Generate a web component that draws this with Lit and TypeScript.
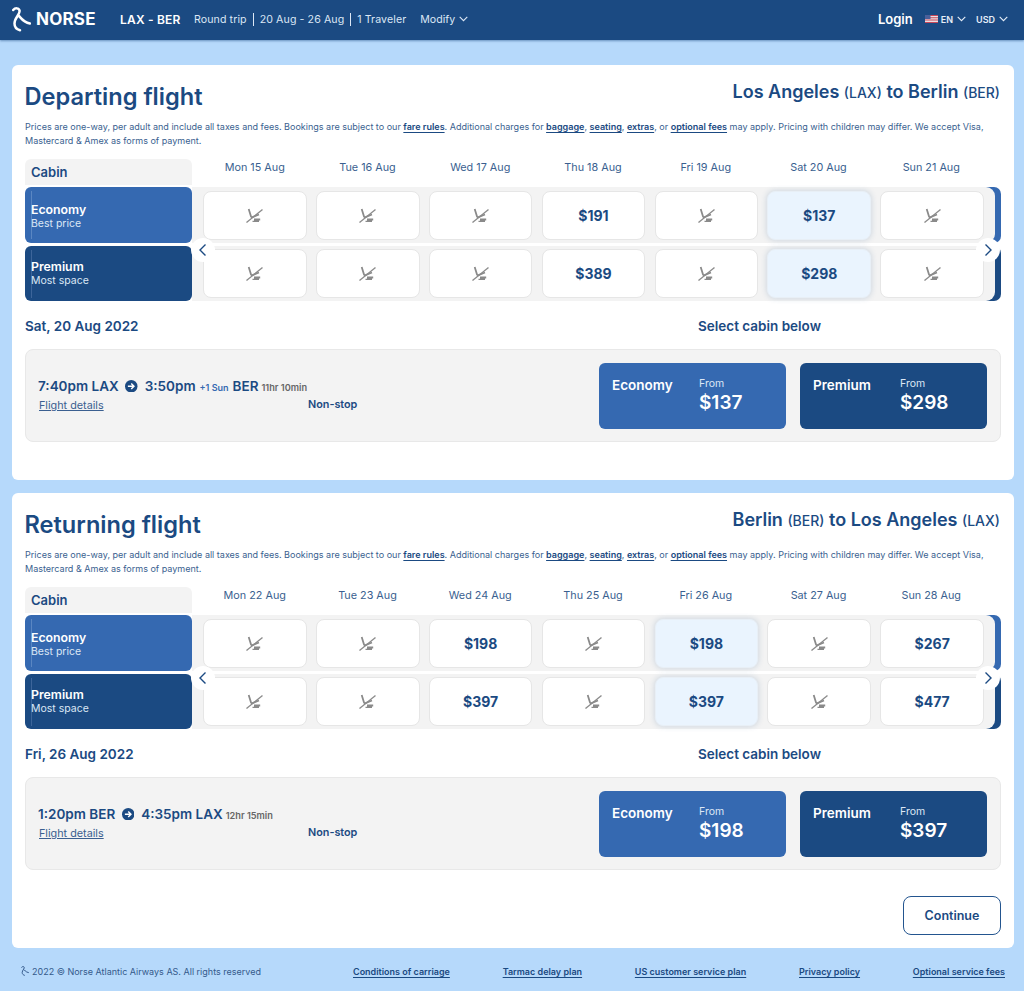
import { LitElement, html, css, svg } from "lit";
import { customElement, property } from "lit/decorators.js";

const chevronDown = html`<svg class="chev" width="9" height="6" viewBox="0 0 9 6"><path d="M.7.8 4.500 4.700 8.300.8" fill="none" stroke="currentColor" stroke-width="1.100"/></svg>`;
const ribbon = svg`<path d="M1.200 3C3 .8 7 .6 7.600 3.800 8 7.500 2.500 10.800 2.500 16.500c0 3.500 2.500 6 5.500 6.800M6 8c2.500 2 4.500 7 12 8.500" fill="none" stroke="currentColor" stroke-width="2.500" stroke-linecap="round"/>`;
const noSeat = html`<svg class="noseat" width="17" height="15" viewBox="0 0 17 15">
  <path d="M.5 14.500 16.500 1.500" stroke="#8a8a8a" stroke-width="1.300" fill="none"/>
  <path d="M2.700 1 5 8.500q.4 1 1.500.6L13 6.500" stroke="#8a8a8a" stroke-width="1.800" fill="none"/>
  <path d="M8 10.500h6.200v2H13V14H6.500v-1.300H8z" fill="#8a8a8a"/>
</svg>`;
const flag = html`<svg class="flag" width="13" height="8" viewBox="0 0 13 8">
  <rect width="13" height="8" fill="#e9dfe3"/>
  <path d="M0 0h13v1H0zM0 2.300h13v1H0zM0 4.600h13v1H0zM0 7h13v1H0z" fill="#c9485a"/>
  <rect width="5.500" height="4" fill="#4a5f9a"/>
</svg>`;

const DESC_TAIL = html`Prices are one-way, per adult and include all taxes and fees. Bookings are subject to our <a>fare rules</a>. Additional charges for <a>baggage</a>, <a>seating</a>, <a>extras</a>, or <a>optional fees</a> may apply. Pricing with children may differ. We accept Visa, Mastercard &amp; Amex as forms of payment.`;

interface Fl {
  title: string;
  route: unknown;
  days: string[];
  eco: (string | null)[];
  prem: (string | null)[];
  sel: number;
  dateLabel: string;
  times: unknown;
  ecoFrom: string;
  premFrom: string;
}

@customElement("flight-section")
class FlightSection extends LitElement {
  @property({ attribute: false }) data!: Fl;
  static styles = css`
    :host { display: block; color: #1b4a82; }
    .top { display: flex; justify-content: space-between; align-items: flex-start; }
    h2 { margin: 0 0 0 -.5px; padding-top: 1px; font-size: 23.600px; line-height: 30px; font-weight: 600; }
    .route { font-size: 18px; line-height: 22px; font-weight: 600; padding-right: 1px; }
    .route small { font-size: 14px; font-weight: 500; }
    .desc { margin: 8px 0 11px; font-size: 9.030px; line-height: 14px; color: #3a5f90; width: 965px; }
    .desc a { font-weight: 600; color: #1b4a82; text-decoration: underline; text-underline-offset: 1.500px; }
    .table { position: relative; display: grid; grid-template-columns: 167px 1fr; width: 976px; }
    .cabin-h { background: #f3f3f3; height: 26px; margin-bottom: 2px; border-radius: 6px 6px 0 0; font-size: 13px; font-weight: 600; line-height: 26px; padding-left: 6px; box-sizing: border-box; }
    .days { display: grid; grid-template-columns: repeat(7, 1fr); column-gap: 9.250px; padding: 1px 18px 0 11px; }
    .days div { text-align: center; font-size: 10.800px; line-height: 16px; color: #3a5f90; font-weight: 400; }
    .tile { border-radius: 6px; color: #fff; padding: 1px 0 0 6px; box-sizing: border-box; display: flex; flex-direction: column; justify-content: center; background-repeat: no-repeat; background-size: 1px 48px; background-position: 6px center; }
    .tile b { font-size: 12.300px; font-weight: 600; line-height: 14px; }
    .tile span { font-size: 10.500px; line-height: 13px; color: #dce7f5; }
    .eco { background-color: #3569b1; background-image: linear-gradient(#5a86c2, #5a86c2); height: 56px; padding-top: 2px; }
    .prem { background-color: #1b4a82; background-image: linear-gradient(#3d659a, #3d659a); height: 55px; margin-top: 3px; padding-top: 0; }
    .strip { padding-right: 6px; border-radius: 0 7px 7px 0; box-sizing: border-box; }
    .strip.a { height: 56px; background: #3569b1; }
    .strip.b { height: 55px; margin-top: 3px; background: #1b4a82; }
    .rowcells { height: 100%; box-sizing: border-box; background: #f3f3f3; display: grid; grid-template-columns: repeat(7, 1fr); column-gap: 9.250px; padding: 0 11px; border-radius: 0 9px 9px 0; align-items: center; }
    .strip.a .rowcells { padding-top: 1px; }
    .cell { height: 49px; background: #fff; border: 1px solid #e6e6e6; border-radius: 8px; box-sizing: border-box; display: flex; align-items: center; justify-content: center; font-size: 14px; font-weight: 700; }
    .cell.sel { background: #eaf4fe; border-color: #e8eff6; box-shadow: 0 0 6px rgba(27, 74, 130, .2); }
    .nav { position: absolute; width: 24px; height: 24px; border-radius: 50%; background: #fff; top: 78.500px; display: flex; align-items: center; justify-content: center; }
    .nav.l { left: 166px; }
    .nav.r { left: 951px; }
    .sub { display: grid; grid-template-columns: 673px 1fr; margin: 17px 0 15px; font-size: 13.500px; line-height: 16px; font-weight: 600; }
    .box { width: 976px; box-sizing: border-box; height: 93px; border: 1px solid #e8e8e8; border-radius: 8px; background: #f3f3f3; display: flex; padding: 13px 13px 12px 12px; }
    .left { flex: 1; padding-top: 14px; }
    .times { display: flex; align-items: center; height: 18px; font-size: 13.500px; font-weight: 600; white-space: nowrap; }
    .times svg { margin: 0 7px 0 6.500px; flex: none; width: 12.500px; height: 12.500px; }
    .times .plus { font-size: 9px; margin: 2px 4px 0; color: #3569b1; }
    .times .dur { font-size: 9.200px; margin: 2px 0 0 3px; color: #666; }
    .below { display: grid; grid-template-columns: 270px auto; margin-top: 4px; font-size: 10.800px; line-height: 14px; }
    .below a { margin-left: 1px; text-decoration: underline; color: #3a5f90; }
    .below b { font-weight: 600; margin-top: -1px; }
    .fares { display: flex; gap: 14px; }
    .fare { width: 187px; height: 66px; border-radius: 6px; color: #fff; display: grid; grid-template-columns: 87px 1fr; padding: 13px 0 0 13px; box-sizing: border-box; }
    .fare.e { background: #3569b1; }
    .fare.p { background: #1b4a82; }
    .fare .n { font-size: 13.500px; font-weight: 600; line-height: 18px; }
    .fare .w { padding-top: 1px; }
    .fare .f { font-size: 10.500px; line-height: 14px; color: #dce7f5; }
    .fare .v { font-size: 19px; line-height: 24px; font-weight: 600; }
  `;
  cell(v: string | null, i: number) {
    return html`<div class="cell ${i === this.data.sel ? "sel" : ""}">${v ?? noSeat}</div>`;
  }
  render() {
    const d = this.data;
    return html`
      <div class="top"><h2>${d.title}</h2><div class="route">${d.route}</div></div>
      <p class="desc">${DESC_TAIL}</p>
      <div class="table">
        <div class="cabin-h">Cabin</div>
        <div class="days">${d.days.map((x) => html`<div>${x}</div>`)}</div>
        <div class="tile eco"><b>Economy</b><span>Best price</span></div>
        <div class="strip a"><div class="rowcells">${d.eco.map((v, i) => this.cell(v, i))}</div></div>
        <div class="tile prem"><b>Premium</b><span>Most space</span></div>
        <div class="strip b"><div class="rowcells">${d.prem.map((v, i) => this.cell(v, i))}</div></div>
        <div class="nav l"><svg width="8" height="12" viewBox="0 0 8 12"><path d="M6.500.5 1 6l5.500 5.500" fill="none" stroke="#1b4a82" stroke-width="1.400"/></svg></div>
        <div class="nav r"><svg width="8" height="12" viewBox="0 0 8 12"><path d="M1.500.5 7 6l-5.500 5.500" fill="none" stroke="#1b4a82" stroke-width="1.400"/></svg></div>
      </div>
      <div class="sub"><div>${d.dateLabel}</div><div>Select cabin below</div></div>
      <div class="box">
        <div class="left">
          <div class="times">${d.times}</div>
          <div class="below"><a>Flight details</a><b>Non-stop</b></div>
        </div>
        <div class="fares">
          <div class="fare e"><div class="n">Economy</div><div class="w"><div class="f">From</div><div class="v">${d.ecoFrom}</div></div></div>
          <div class="fare p"><div class="n">Premium</div><div class="w"><div class="f">From</div><div class="v">${d.premFrom}</div></div></div>
        </div>
      </div>
    `;
  }
}

const arrow = html`<svg width="13" height="13" viewBox="0 0 13 13"><circle cx="6.500" cy="6.500" r="6.500" fill="#1b4a82"/><path d="M3 6.500h6M6.500 3.700l2.800 2.800-2.800 2.800" fill="none" stroke="#fff" stroke-width="1.500"/></svg>`;
const N = null;

const dep: Fl = {
  title: "Departing flight",
  route: html`Los Angeles <small>(LAX)</small> to Berlin <small>(BER)</small>`,
  days: ["Mon 15 Aug", "Tue 16 Aug", "Wed 17 Aug", "Thu 18 Aug", "Fri 19 Aug", "Sat 20 Aug", "Sun 21 Aug"],
  eco: [N, N, N, "$191", N, "$137", N],
  prem: [N, N, N, "$389", N, "$298", N],
  sel: 5,
  dateLabel: "Sat, 20 Aug 2022",
  times: html`<span>7:40pm LAX</span>${arrow}<span>3:50pm</span><span class="plus">+1 Sun</span><span>BER</span><span class="dur">11hr 10min</span>`,
  ecoFrom: "$137",
  premFrom: "$298",
};
const ret: Fl = {
  title: "Returning flight",
  route: html`Berlin <small>(BER)</small> to Los Angeles <small>(LAX)</small>`,
  days: ["Mon 22 Aug", "Tue 23 Aug", "Wed 24 Aug", "Thu 25 Aug", "Fri 26 Aug", "Sat 27 Aug", "Sun 28 Aug"],
  eco: [N, N, "$198", N, "$198", N, "$267"],
  prem: [N, N, "$397", N, "$397", N, "$477"],
  sel: 4,
  dateLabel: "Fri, 26 Aug 2022",
  times: html`<span>1:20pm BER</span>${arrow}<span>4:35pm LAX</span><span class="dur">12hr 15min</span>`,
  ecoFrom: "$198",
  premFrom: "$397",
};

@customElement("app-root")
export class AppRoot extends LitElement {
  static styles = css`
    :host { display: block; min-height: 991px; background: #b6d9fb; font-family: Inter, "Liberation Sans", sans-serif; color: #1b4a82; overflow: hidden; }
    header { height: 40px; background: #1b4a82; box-shadow: 0 1px 2px rgba(27, 74, 130, .5); color: #fff; display: flex; align-items: center; padding: 0 16px 2px 12px; box-sizing: border-box; }
    .logo { flex: none; }
    .brand { font-size: 17px; font-weight: 700; margin-left: 5px; width: 84px; letter-spacing: .2px; }
    .pair { font-size: 12px; font-weight: 600; width: 74px; letter-spacing: .2px; }
    .meta { font-size: 10.600px; color: #dce7f5; font-weight: 400; display: flex; align-items: center; letter-spacing: .1px; }
    .meta i { width: 1px; height: 13px; background: #dce7f5; margin: 0 6px; }
    .mod { font-size: 10.600px; color: #dce7f5; margin-left: 14px; display: flex; align-items: center; gap: 4px; }
    .sp { flex: 1; }
    .login { font-size: 13px; font-weight: 600; margin-right: 12px; }
    .lang { display: flex; align-items: center; font-size: 9px; font-weight: 600; color: #e6eef8; }
    .lang .flag { margin-right: 3px; }
    .lang .chev { margin-left: 4px; }
    .lang + .lang { margin-left: 10px; }
    main { padding: 25px 10px 0 12px; display: flex; flex-direction: column; gap: 13px; }
    .card { background: #fff; border-radius: 6px; padding: 16px 13px 38px 13px; }
    .card.last { padding-bottom: 13px; }
    .act { display: flex; justify-content: flex-end; margin-top: 26px; }
    .btn { width: 98px; height: 39px; border: 1px solid #23558f; border-radius: 8px; display: flex; align-items: center; justify-content: center; font-size: 12.500px; font-weight: 600; box-sizing: border-box; }
    footer { display: flex; align-items: center; height: 43px; padding: 3px 19px 0 21px; font-size: 9px; box-sizing: border-box; }
    footer .c { width: 332px; color: #34598b; display: flex; align-items: center; gap: 3px; }
    footer .links { flex: 1; display: flex; justify-content: space-between; }
    footer a { font-weight: 600; text-decoration: underline; text-underline-offset: 1.500px; }
  `;
  render() {
    return html`
      <header>
        <svg class="logo" width="19" height="25" viewBox="0 0 19 25">${ribbon}</svg>
        <div class="brand">NORSE</div>
        <div class="pair">LAX - BER</div>
        <div class="meta"><span>Round trip</span><i></i><span>20 Aug - 26 Aug</span><i></i><span>1 Traveler</span></div>
        <div class="mod">Modify ${chevronDown}</div>
        <div class="sp"></div>
        <div class="login">Login</div>
        <div class="lang">${flag}EN${chevronDown}</div>
        <div class="lang">USD${chevronDown}</div>
      </header>
      <main>
        <section class="card"><flight-section .data=${dep}></flight-section></section>
        <section class="card last">
          <flight-section .data=${ret}></flight-section>
          <div class="act"><div class="btn">Continue</div></div>
        </section>
      </main>
      <footer>
        <div class="c"><svg width="8" height="10" viewBox="0 0 19 25">${ribbon}</svg>2022 © Norse Atlantic Airways AS. All rights reserved</div>
        <div class="links"><a>Conditions of carriage</a><a>Tarmac delay plan</a><a>US customer service plan</a><a>Privacy policy</a><a>Optional service fees</a></div>
      </footer>
    `;
  }
}
void FlightSection;
